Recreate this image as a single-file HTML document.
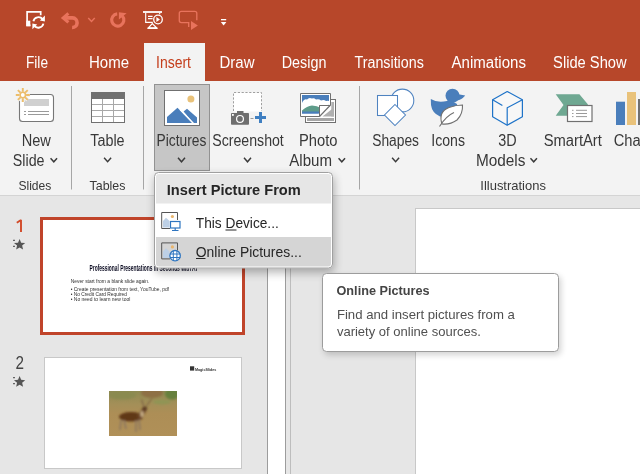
<!DOCTYPE html>
<html><head><meta charset="utf-8"><style>
html,body{margin:0;padding:0;width:640px;height:474px;overflow:hidden;background:#E6E6E6;}
svg{display:block;will-change:transform;font-family:"Liberation Sans",sans-serif;}
</style></head><body>
<svg width="640" height="474" viewBox="0 0 640 474">
<rect x="0" y="0" width="640" height="474" fill="#E6E6E6"/>
<rect x="0" y="0" width="640" height="81" fill="#B7472A"/>
<rect x="0" y="81" width="640" height="114" fill="#F3F3F3"/>
<rect x="0" y="195" width="640" height="1" fill="#D4D4D4"/>
<rect x="144" y="43" width="61" height="38" fill="#F3F3F3"/>
<path d="M30.5 25.4 H27.1 V11.9 H40.7 V15.2" fill="none" stroke="#fff" stroke-width="1.7"/><rect x="26.3" y="20.7" width="4" height="5.5" fill="#fff"/><g fill="none" stroke="#fff" stroke-width="1.9"><path d="M33.4 21.3 A5.2 5.2 0 0 1 42.6 19.2"/><path d="M43.4 23.6 A5.2 5.2 0 0 1 34.2 25.6"/></g><path d="M44.9 15.6 L44.9 21.4 L39.9 20.4 Z" fill="#fff"/><path d="M32.4 29.2 L32.4 23.4 L37.2 24.6 Z" fill="#fff"/>
<g fill="none" stroke="#E8735C" stroke-width="3.6" stroke-linecap="butt"><path d="M65 17.9 H72.5 A4.8 4.8 0 0 1 72.1 27.5"/><path d="M68.4 13.4 L63.2 17.9 L68.4 22.4" stroke-width="3.1" stroke-linejoin="miter"/></g>
<path d="M88.25 17.9 L91.5 21.5 L94.75 17.9" fill="none" stroke="#E8735C" stroke-width="1.45"/>
<path d="M117.2 13.9 A6.1 6.1 0 1 0 122.4 16" fill="none" stroke="#E8735C" stroke-width="3.2"/><path d="M118.9 12.2 L126.6 13.3 L118.9 19.6 Z" fill="#E8735C"/>
<rect x="143" y="11.1" width="19" height="1.8" fill="#fff"/><g fill="none" stroke="#fff" stroke-width="1.15"><path d="M159.7 12.8 V14.3"/><path d="M145.7 12.8 V22.3 H152.8"/><path d="M148 16.3 H152.6 M148 18.6 H152.6"/><circle cx="158" cy="19.5" r="4.3" stroke-width="1.3"/><path d="M152.3 23.6 L148.4 27.9 H156.6 Z" stroke-width="1.3"/></g><path d="M156.4 16.9 L160 19.5 L156.4 22.1 Z" fill="#fff"/><path d="M147.6 28.3 H157.4" stroke="#fff" stroke-width="1.4"/>
<path d="M188.7 27 V22.6 H181.3 A2 2 0 0 1 179.3 20.6 V13.3 A2 2 0 0 1 181.3 11.3 H194.8 A2 2 0 0 1 196.8 13.3 V20.3" fill="none" stroke="#E8735C" stroke-width="1.35"/><path d="M191 20.9 L197.9 25.5 L191 30 Z" fill="#E8735C"/>
<rect x="221" y="19" width="5.2" height="1.3" fill="#fff"/><path d="M220.8 21.9 L223.6 25.4 L226.4 21.9 Z" fill="#fff"/>
<text x="26" y="68" font-size="16" fill="#fff" textLength="22" lengthAdjust="spacingAndGlyphs">File</text>
<text x="89" y="68" font-size="16" fill="#fff" textLength="40" lengthAdjust="spacingAndGlyphs">Home</text>
<text x="156" y="68" font-size="16" fill="#C43E1C" textLength="35" lengthAdjust="spacingAndGlyphs">Insert</text>
<text x="219.5" y="68" font-size="16" fill="#fff" textLength="35" lengthAdjust="spacingAndGlyphs">Draw</text>
<text x="281.7" y="68" font-size="16" fill="#fff" textLength="44.7" lengthAdjust="spacingAndGlyphs">Design</text>
<text x="354.5" y="68" font-size="16" fill="#fff" textLength="69.3" lengthAdjust="spacingAndGlyphs">Transitions</text>
<text x="451.6" y="68" font-size="16" fill="#fff" textLength="74.3" lengthAdjust="spacingAndGlyphs">Animations</text>
<text x="553.1" y="68" font-size="16" fill="#fff" textLength="73.5" lengthAdjust="spacingAndGlyphs">Slide Show</text>
<path d="M71.5 86 V189.5" stroke="#A6A6A6" stroke-width="1"/>
<path d="M143.5 86 V189.5" stroke="#A6A6A6" stroke-width="1"/>
<path d="M359.5 86 V189.5" stroke="#A6A6A6" stroke-width="1"/>
<rect x="154.5" y="84.5" width="55" height="86" fill="#C6C6C6" stroke="#929292" stroke-width="1"/>
<text x="21.7" y="146" font-size="16" fill="#383838" textLength="29.2" lengthAdjust="spacingAndGlyphs">New</text>
<text x="12.8" y="166" font-size="16" fill="#383838" textLength="31.7" lengthAdjust="spacingAndGlyphs">Slide</text>
<path d="M50.55 158.2 L53.8 161.8 L57.05 158.2" fill="none" stroke="#3a3a3a" stroke-width="1.45"/>
<text x="18.4" y="190" font-size="13.5" fill="#383838" textLength="32.9" lengthAdjust="spacingAndGlyphs">Slides</text>
<text x="90.3" y="146" font-size="16" fill="#383838" textLength="34.3" lengthAdjust="spacingAndGlyphs">Table</text>
<path d="M104.1 157.7 L107.6 161.7 L111.1 157.7" fill="none" stroke="#3a3a3a" stroke-width="1.45"/>
<text x="89.6" y="190" font-size="13.5" fill="#383838" textLength="35.9" lengthAdjust="spacingAndGlyphs">Tables</text>
<text x="156.6" y="146" font-size="16" fill="#383838" textLength="49.8" lengthAdjust="spacingAndGlyphs">Pictures</text>
<path d="M178.0 157.8 L181.5 161.8 L185.0 157.8" fill="none" stroke="#3a3a3a" stroke-width="1.45"/>
<text x="212.3" y="146" font-size="16" fill="#383838" textLength="71.5" lengthAdjust="spacingAndGlyphs">Screenshot</text>
<path d="M244.0 157.8 L247.5 161.8 L251.0 157.8" fill="none" stroke="#3a3a3a" stroke-width="1.45"/>
<text x="299" y="146" font-size="16" fill="#383838" textLength="38.5" lengthAdjust="spacingAndGlyphs">Photo</text>
<text x="289.3" y="166" font-size="16" fill="#383838" textLength="42.7" lengthAdjust="spacingAndGlyphs">Album</text>
<path d="M338.55 158.2 L341.8 161.8 L345.05 158.2" fill="none" stroke="#3a3a3a" stroke-width="1.45"/>
<text x="372.2" y="146" font-size="16" fill="#383838" textLength="46.8" lengthAdjust="spacingAndGlyphs">Shapes</text>
<path d="M392.1 157.7 L395.6 161.7 L399.1 157.7" fill="none" stroke="#3a3a3a" stroke-width="1.45"/>
<text x="431.3" y="146" font-size="16" fill="#383838" textLength="33.7" lengthAdjust="spacingAndGlyphs">Icons</text>
<text x="498.2" y="146" font-size="16" fill="#383838" textLength="18.4" lengthAdjust="spacingAndGlyphs">3D</text>
<text x="475.9" y="166" font-size="16" fill="#383838" textLength="49.5" lengthAdjust="spacingAndGlyphs">Models</text>
<path d="M530.45 158.2 L533.7 161.8 L536.95 158.2" fill="none" stroke="#3a3a3a" stroke-width="1.45"/>
<text x="543.7" y="146" font-size="16" fill="#383838" textLength="58.2" lengthAdjust="spacingAndGlyphs">SmartArt</text>
<text x="613.7" y="146" font-size="16" fill="#383838" textLength="36" lengthAdjust="spacingAndGlyphs">Chart</text>
<text x="480.3" y="190" font-size="13.5" fill="#383838" textLength="65.6" lengthAdjust="spacingAndGlyphs">Illustrations</text>
<rect x="19.5" y="94.5" width="34" height="27" rx="3" fill="#fff" stroke="#777" stroke-width="1.1"/><rect x="24" y="99" width="25" height="7" fill="#D0D0D0"/><path d="M24 111.5 H26 M28 111.5 H49 M24 114.5 H26 M28 114.5 H49" stroke="#9A9A9A" stroke-width="1"/>
<g stroke="#F3F3F3" stroke-width="4"><path d="M26.10 95.00 L29.80 95.00 M25.13 97.33 L27.75 99.95 M22.80 98.30 L22.80 102.00 M20.47 97.33 L17.85 99.95 M19.50 95.00 L15.80 95.00 M20.47 92.67 L17.85 90.05 M22.80 91.70 L22.80 88.00 M25.13 92.67 L27.75 90.05"/></g><circle cx="22.8" cy="95" r="4.6" fill="#F3F3F3"/>
<g stroke="#ECBD6A" stroke-width="1.9" stroke-linecap="butt"><path d="M26.10 95.00 L29.80 95.00 M25.13 97.33 L27.75 99.95 M22.80 98.30 L22.80 102.00 M20.47 97.33 L17.85 99.95 M19.50 95.00 L15.80 95.00 M20.47 92.67 L17.85 90.05 M22.80 91.70 L22.80 88.00 M25.13 92.67 L27.75 90.05"/></g><circle cx="22.8" cy="95" r="2.7" fill="#fff" stroke="#ECBD6A" stroke-width="1.6"/>
<rect x="91.5" y="92.5" width="33" height="30" fill="#fff" stroke="#777" stroke-width="1"/><rect x="91" y="92" width="34" height="7" fill="#707070"/><path d="M102.5 99 V122 M113.5 99 V122 M92 104.5 H124 M92 110.5 H124 M92 116.5 H124" stroke="#A8A8A8" stroke-width="1"/><rect x="91.5" y="92.5" width="33" height="30" fill="none" stroke="#707070" stroke-width="1"/>
<rect x="164.5" y="90.5" width="35" height="35" fill="#fff" stroke="#707070" stroke-width="1"/><circle cx="190.9" cy="99" r="3.5" fill="#E9C27A"/><path d="M167 117 L177.5 107.8 L192.2 123 H167 Z" fill="#4A7EBB"/><path d="M183.6 111.5 L187 108.8 L197 117.5 V123 H193.5 Z" fill="#4A7EBB"/><path d="M180 109.5 L194 124" stroke="#fff" stroke-width="1.1"/>
<rect x="233.5" y="92.5" width="28" height="19" fill="#fff"/><path d="M233.5 111 V92.5 H261.5 V111" fill="none" stroke="#A0A0A0" stroke-width="1" stroke-dasharray="2.2 1.6"/><rect x="231" y="113" width="18" height="11.7" rx="0.8" fill="#6E6E6E"/><rect x="237" y="111" width="6.5" height="3" fill="#6E6E6E"/><circle cx="240" cy="118.9" r="3.4" fill="#6E6E6E" stroke="#fff" stroke-width="1.2"/><rect x="232" y="114" width="1.8" height="1.8" fill="#fff"/><path d="M250.5 118.5 H253.5" stroke="#999" stroke-width="1"/><path d="M260.5 112 V123 M255 117.5 H266" stroke="#3F7FC1" stroke-width="3"/>
<rect x="305.5" y="99.5" width="30" height="23" fill="#fff" stroke="#707070" stroke-width="1"/><rect x="307" y="118" width="27" height="3" fill="#A6A6A6"/><rect x="331.3" y="102" width="2.7" height="14.5" fill="#B0B0B0"/><path d="M322.5 116.5 L334 107.5 V116.5 Z" fill="#B0B0B0"/><path d="M300.5 93.5 H330.5 V105 L319.5 116.5 H300.5 Z" fill="#fff" stroke="#707070" stroke-width="1"/><clipPath id="pac"><path d="M302 95 H329 V104.5 L318.5 113.5 H302 Z"/></clipPath><g clip-path="url(#pac)"><rect x="302" y="95" width="27" height="19" fill="#4A7EBB"/><path d="M302 103 Q304 98.5 307 99.5 Q309 97 312 98.5 Q314 97.8 316 99.5 Q319 98.5 321 100.5 Q324 99.5 326 101 Q328 100.5 329 101 V113 H302 Z" fill="#fff"/><path d="M302 110.5 Q307 106 312 105.5 Q317 105.5 321 108 L329 112 V113 H302 Z" fill="#5E9C8A"/><rect x="302" y="111.5" width="27" height="2.5" fill="#4A7EBB"/></g><path d="M319.5 116.5 V105.5 H330" fill="#fff" stroke="#707070" stroke-width="1"/><path d="M319.5 116.5 V105.5 H330 Z" fill="#fff"/><path d="M319.5 116.5 V105.5 H330" fill="none" stroke="#707070" stroke-width="1"/><path d="M330.5 105 L319.5 116.5" stroke="#707070" stroke-width="1.1"/>
<g fill="#fff" stroke="#4F83C0" stroke-width="1.05"><circle cx="402.4" cy="100.5" r="11.4"/><rect x="377.5" y="95.5" width="20" height="20"/><path d="M395 104.5 L405.5 115 L395 125.5 L384.5 115 Z"/></g>
<g fill="#4A7EBB"><circle cx="452.5" cy="95.8" r="7"/><path d="M457 94 L465.2 95.5 Q461.5 100 457 100.5 Z"/><path d="M430.8 99 Q437 103 447 101 L450 100 L457 104 Q458 108 455 112 Q448 117 440 116.5 Q432 113 431 105 Z"/></g><path d="M442 124 Q438 112 449 107.5 Q456 105 462.5 105 Q463 114 457 120 Q450 125 442 124 Z" fill="#fff" stroke="#707070" stroke-width="1.1"/><path d="M439.5 126.5 Q446 116 454 112.5" fill="none" stroke="#707070" stroke-width="1.1"/>
<g fill="#F7F7F7" stroke="#1E73C8" stroke-width="1.2" stroke-linejoin="round"><path d="M507.2 91.5 L522.4 99.7 V116.8 L507.2 125.2 L492.6 116.8 V99.7 Z"/><path d="M522.4 99.7 L507.2 107.8 V125.2" fill="none"/><path d="M492.6 99.7 L502.4 105.4" fill="none"/></g>
<path d="M555.7 94.2 H579.4 L588 104.5 L579.4 115.8 H555.7 L563.5 105 Z" fill="#6FA892"/><rect x="567.5" y="105.5" width="24.5" height="16" fill="#fff" stroke="#707070" stroke-width="1.2"/><path d="M572 110.3 H573.5 M576 110.3 H587 M572 113.5 H573.5 M576 113.5 H587 M572 116.6 H573.5 M576 116.6 H587" stroke="#9A9A9A" stroke-width="1"/>
<rect x="616" y="101.7" width="9" height="23.3" fill="#4A7EBB"/><rect x="627" y="92" width="9" height="33" fill="#E9C27A"/><rect x="638" y="99" width="3" height="26" fill="#707070"/>
<path d="M21 232 V219.8 M21 220 L16.8 222.8" fill="none" stroke="#D24A28" stroke-width="1.9"/>
<path d="M19.60 238.90 L21.16 242.65 L25.21 242.98 L22.13 245.62 L23.07 249.57 L19.60 247.46 L16.13 249.57 L17.07 245.62 L13.99 242.98 L18.04 242.65 Z" fill="#555"/>
<path d="M13 240.4 H15 M13 246.4 H15" stroke="#666" stroke-width="1.1"/>
<path d="M41.5 218.5 H243.5 V333.5 H41.5 Z" fill="#fff" stroke="#C0442A" stroke-width="3"/>
<text x="89.5" y="271.3" font-size="8.2" font-weight="700" fill="#0A0A20" textLength="107.5" lengthAdjust="spacingAndGlyphs">Professional Presentations in Seconds with AI</text>
<g font-size="5" fill="#2E2E2E"><text x="70.7" y="282.6" textLength="78.7" lengthAdjust="spacingAndGlyphs">Never start from a blank slide again.</text><text x="70.7" y="290.7" textLength="98.3" lengthAdjust="spacingAndGlyphs">• Create presentation from text, YouTube, pdf</text><text x="70.7" y="295.6" textLength="56.3" lengthAdjust="spacingAndGlyphs">• No Credit Card Required</text><text x="70.7" y="300.8" textLength="59.6" lengthAdjust="spacingAndGlyphs">• No need to learn new tool</text></g>
<text x="15.6" y="369" font-size="18.5" fill="#444" textLength="8.5" lengthAdjust="spacingAndGlyphs">2</text>
<path d="M19.60 376.10 L21.16 379.85 L25.21 380.18 L22.13 382.82 L23.07 386.77 L19.60 384.65 L16.13 386.77 L17.07 382.82 L13.99 380.18 L18.04 379.85 Z" fill="#555"/>
<path d="M13 377.6 H15 M13 383.6 H15" stroke="#666" stroke-width="1.1"/>
<rect x="44.5" y="357.5" width="197" height="111" fill="#fff" stroke="#C8C8C8" stroke-width="1"/>
<defs><linearGradient id="grass" x1="0" y1="0" x2="0" y2="1"><stop offset="0" stop-color="#8E8A52"/><stop offset="0.3" stop-color="#A48F58"/><stop offset="0.5" stop-color="#AD8E56"/><stop offset="1" stop-color="#B09058"/></linearGradient><filter id="bl" x="-10%" y="-10%" width="120%" height="120%"><feGaussianBlur stdDeviation="0.9"/></filter><clipPath id="dc"><rect x="109" y="391" width="68" height="45"/></clipPath></defs><rect x="109" y="391" width="68" height="45" fill="url(#grass)"/><g clip-path="url(#dc)"><g filter="url(#bl)"><ellipse cx="152" cy="393" rx="11" ry="5" fill="#8E7044"/><ellipse cx="172" cy="394" rx="7" ry="5.5" fill="#66803E"/><ellipse cx="122" cy="395" rx="14" ry="4.5" fill="#8A8A50"/><ellipse cx="162" cy="402" rx="9" ry="2.5" fill="#909455"/><ellipse cx="131" cy="416.8" rx="12" ry="4.8" fill="#603818"/><path d="M137 416 L143 407.5 L147 409.5 L141 420 Z" fill="#6F4A2A"/><ellipse cx="144.8" cy="408.6" rx="2.4" ry="1.8" fill="#5A3A20"/><path d="M144 407 L141.5 399.5 M145.5 407 L152 398.5" stroke="#6D5036" stroke-width="0.9"/><path d="M121 420 L120 430 M124 420 L126 429 M136 420 L136 432 M139 419 L140 430" stroke="#8A7560" stroke-width="1.5"/><ellipse cx="142" cy="414" rx="1.6" ry="3" fill="#C9B089"/></g></g>
<rect x="190" y="366.3" width="4.2" height="4.3" fill="#333"/><text x="195" y="370.6" font-size="4" font-weight="700" fill="#333" textLength="21.3" lengthAdjust="spacingAndGlyphs">MagicSlides</text>
<rect x="267" y="196" width="1" height="278" fill="#9C9C9C"/>
<rect x="268" y="196" width="17" height="278" fill="#FFFFFF"/>
<rect x="285" y="196" width="1" height="278" fill="#9C9C9C"/>
<rect x="290" y="196" width="1" height="278" fill="#BDBDBD"/>
<rect x="415.5" y="208.5" width="240" height="280" fill="#fff" stroke="#C8C8C8" stroke-width="1"/>
<defs><filter id="sh" x="-20%" y="-20%" width="140%" height="150%"><feGaussianBlur in="SourceAlpha" stdDeviation="5"/><feOffset dx="1" dy="4"/><feComponentTransfer><feFuncA type="linear" slope="0.3"/></feComponentTransfer><feMerge><feMergeNode/><feMergeNode in="SourceGraphic"/></feMerge></filter></defs>
<rect x="154.5" y="172.5" width="178" height="95.5" rx="4" fill="#fff" stroke="#A0A0A0" stroke-width="1" filter="url(#sh)"/>
<clipPath id="mclip"><rect x="156" y="174" width="175" height="92.5" rx="3"/></clipPath>
<g clip-path="url(#mclip)"><rect x="156" y="174" width="175" height="29.5" fill="#E6E6E6"/><rect x="156" y="237" width="175" height="30" fill="#D5D5D5"/></g>
<text x="166.8" y="194.7" font-size="14.5" fill="#262626" font-weight="700" textLength="134" lengthAdjust="spacingAndGlyphs">Insert Picture From</text>
<text x="195.8" y="228" font-size="15.5" fill="#262626" textLength="83" lengthAdjust="spacingAndGlyphs">This Device...</text>
<path d="M225.5 230 H236.5" stroke="#262626" stroke-width="1"/>
<text x="195.8" y="256.5" font-size="15.5" fill="#262626" textLength="106" lengthAdjust="spacingAndGlyphs">Online Pictures...</text>
<path d="M196 258.5 H205.5" stroke="#262626" stroke-width="1"/>
<path d="M170 228.5 H161.7 V212.5 H177.5 V220" fill="none" stroke="#555" stroke-width="1"/><path d="M163 227.5 V221 L166 217.8 L169.5 221 V227.5 Z" fill="#BDD0E6"/><circle cx="172.4" cy="216.5" r="1.6" fill="#E9B56C"/>
<path d="M170 258.9 H161.7 V242.9 H177.5 V250.4" fill="none" stroke="#555" stroke-width="1"/><path d="M163 257.9 V251.4 L166 248.20000000000002 L169.5 251.4 V257.9 Z" fill="#BDD0E6"/><circle cx="172.4" cy="246.9" r="1.6" fill="#E9B56C"/>
<rect x="170.5" y="221.5" width="9.5" height="6.5" fill="#fff" stroke="#2E75C0" stroke-width="1.2"/><path d="M175.2 228 V230.5 M172 230.5 H178.5" stroke="#2E75C0" stroke-width="1.2"/>
<circle cx="175.1" cy="255.7" r="5.2" fill="#fff" stroke="#2E75C0" stroke-width="1.3"/><path d="M170 254 H180.3 M170 257.5 H180.3 M173.3 250.8 V260.8 M176.9 250.8 V260.8" stroke="#2E75C0" stroke-width="1"/>
<defs><filter id="sh2" x="-20%" y="-20%" width="140%" height="150%"><feGaussianBlur in="SourceAlpha" stdDeviation="3"/><feOffset dx="2" dy="3"/><feComponentTransfer><feFuncA type="linear" slope="0.18"/></feComponentTransfer><feMerge><feMergeNode/><feMergeNode in="SourceGraphic"/></feMerge></filter></defs>
<rect x="322.5" y="273.5" width="236" height="78" rx="4" fill="#fff" stroke="#9C9C9C" stroke-width="1" filter="url(#sh2)"/>
<text x="336.5" y="294.6" font-size="13" fill="#444" font-weight="700" textLength="93" lengthAdjust="spacingAndGlyphs">Online Pictures</text>
<text x="336.9" y="319.4" font-size="13.3" fill="#505050" textLength="178" lengthAdjust="spacingAndGlyphs">Find and insert pictures from a</text>
<text x="336.9" y="336.2" font-size="13.3" fill="#505050" textLength="144" lengthAdjust="spacingAndGlyphs">variety of online sources.</text>
</svg>
</body></html>
